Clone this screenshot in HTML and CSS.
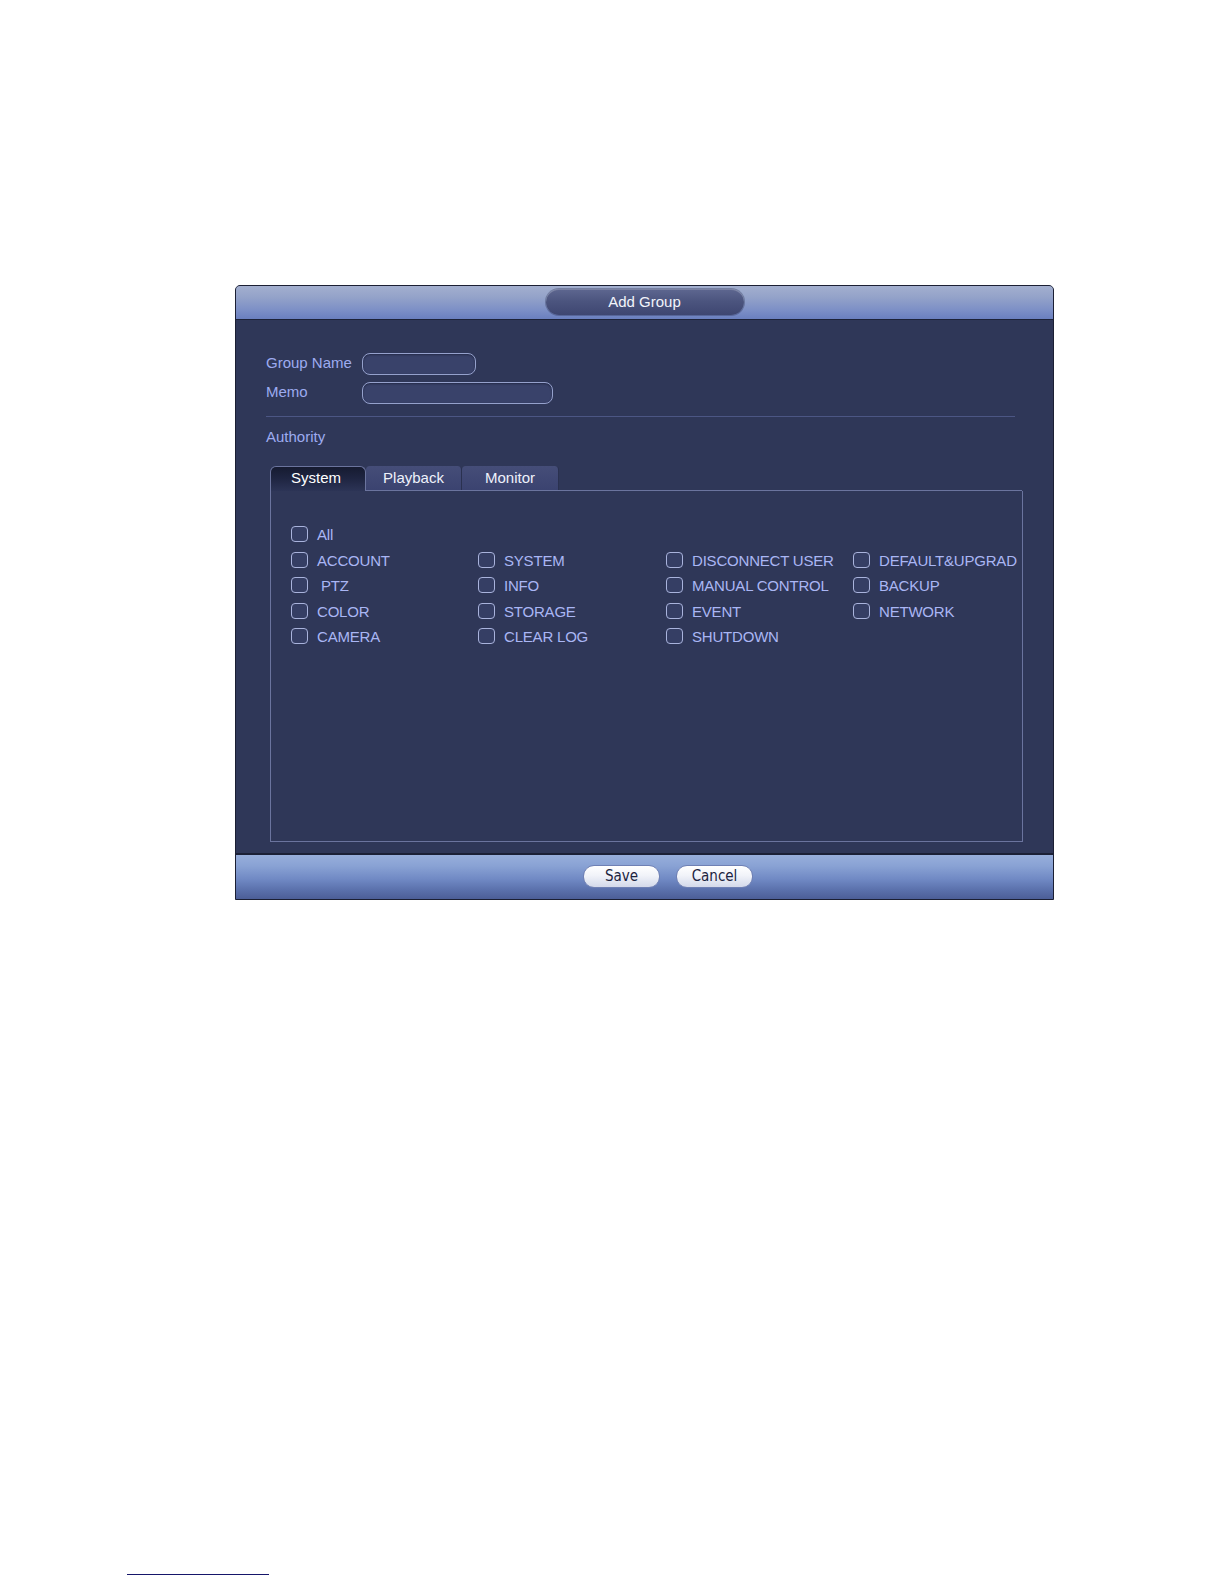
FILE: index.html
```html
<!DOCTYPE html>
<html lang="en">
<head>
<meta charset="utf-8">
<title>Add Group</title>
<link rel="stylesheet" href="styles.css">
</head>
<body>
<div class="page">
  <div class="dialog">
    <div class="header">
      <div class="title-pill">Add Group</div>
    </div>
    <div class="body">
      <div class="form-row">
        <span class="label">Group Name</span>
        <span class="input input-short"></span>
      </div>
      <div class="form-row">
        <span class="label">Memo</span>
        <span class="input input-long"></span>
      </div>
      <div class="separator"></div>
      <div class="section-label">Authority</div>
      <div class="tabs">
        <div class="tab tab-active">System</div>
        <div class="tab">Playback</div>
        <div class="tab">Monitor</div>
      </div>
      <div class="tab-panel">
        <div class="perm-grid">
          <label class="perm"><span class="box"></span><span class="perm-text">All</span></label>
          <span></span><span></span><span></span>

          <label class="perm"><span class="box"></span><span class="perm-text">ACCOUNT</span></label>
          <label class="perm"><span class="box"></span><span class="perm-text">SYSTEM</span></label>
          <label class="perm"><span class="box"></span><span class="perm-text">DISCONNECT USER</span></label>
          <label class="perm"><span class="box"></span><span class="perm-text">DEFAULT&amp;UPGRAD</span></label>

          <label class="perm"><span class="box"></span><span class="perm-text">&nbsp;PTZ</span></label>
          <label class="perm"><span class="box"></span><span class="perm-text">INFO</span></label>
          <label class="perm"><span class="box"></span><span class="perm-text">MANUAL CONTROL</span></label>
          <label class="perm"><span class="box"></span><span class="perm-text">BACKUP</span></label>

          <label class="perm"><span class="box"></span><span class="perm-text">COLOR</span></label>
          <label class="perm"><span class="box"></span><span class="perm-text">STORAGE</span></label>
          <label class="perm"><span class="box"></span><span class="perm-text">EVENT</span></label>
          <label class="perm"><span class="box"></span><span class="perm-text">NETWORK</span></label>

          <label class="perm"><span class="box"></span><span class="perm-text">CAMERA</span></label>
          <label class="perm"><span class="box"></span><span class="perm-text">CLEAR LOG</span></label>
          <label class="perm"><span class="box"></span><span class="perm-text">SHUTDOWN</span></label>
          <span></span>
        </div>
      </div>
    </div>
    <div class="footer">
      <button class="btn">Save</button>
      <button class="btn">Cancel</button>
    </div>
  </div>
  <div class="footnote-rule"></div>
</div>
</body>
</html>
```

FILE: styles.css
```css
html, body {
  margin: 0;
  padding: 0;
  background: #ffffff;
}

body {
  font-family: "Liberation Sans", Arial, sans-serif;
}

.page {
  padding-top: 285px;
}

.dialog {
  margin-left: 235px;
  width: 817px;
  height: 613px;
  border: 1px solid #1b1f33;
  border-radius: 5px 5px 0 0;
  background: #2f3758;
  display: flex;
  flex-direction: column;
  overflow: hidden;
}

.header {
  height: 33px;
  border-bottom: 1px solid #1d2238;
  background: linear-gradient(to bottom, #a3afcf 0%, #93a2c9 35%, #7b8ec6 75%, #6a7fbf 100%);
  display: flex;
  justify-content: center;
  align-items: flex-start;
}

.title-pill {
  margin-top: 3px;
  width: 198px;
  height: 26px;
  border-radius: 13px;
  background: linear-gradient(to bottom, #5e6790 0%, #4c557f 45%, #3e4671 100%);
  box-shadow: inset 0 1px 0 rgba(255,255,255,0.18), 0 0 0 1px rgba(40,46,80,0.35);
  color: #f2f4fb;
  font-size: 15px;
  line-height: 26px;
  text-align: center;
}

.body {
  flex: 1;
  padding: 33px 25px 7px 30px;
  display: flex;
  flex-direction: column;
}

.form-row {
  display: flex;
  align-items: center;
  height: 22px;
  margin-bottom: 7px;
}

.label,
.section-label {
  color: #9dabf0;
  font-size: 15px;
  line-height: 22px;
}

.label {
  width: 96px;
  flex: none;
  margin-top: -2px;
}

.input {
  display: block;
  height: 20px;
  border: 1px solid #95a1cc;
  border-radius: 8px;
  background: #39426a;
  box-shadow: inset 0 1px 2px rgba(10,14,30,0.45);
}

.input-short {
  width: 112px;
}

.input-long {
  width: 189px;
}

.separator {
  margin-top: 5px;
  width: 749px;
  height: 1px;
  background: #4c5684;
}

.section-label {
  margin-top: 9px;
}

.tabs {
  margin-top: 18px;
  margin-left: 4px;
  display: flex;
  height: 25px;
}

.tab {
  width: 96px;
  height: 25px;
  box-sizing: border-box;
  background: linear-gradient(to bottom, #454d78 0%, #3b4370 100%);
  border-radius: 4px 4px 0 0;
  border-right: 1px solid #2a3150;
  border-bottom: 1px solid #6b749e;
  color: #eef1fb;
  font-size: 15px;
  line-height: 24px;
  text-align: center;
}

.tab:last-child {
  width: 97px;
}

.tab-active {
  background: linear-gradient(to bottom, #161b31 0%, #1e2440 45%, #2c3456 100%);
  border: 1px solid #6b749e;
  border-bottom: none;
  border-radius: 6px 6px 0 0;
  color: #ffffff;
  line-height: 22px;
  padding-right: 4px;
}

.tab-panel {
  margin-left: 4px;
  width: 751px;
  height: 350px;
  border: 1px solid #6b749e;
  border-top: none;
}

.tab-panel::before {
  content: "";
  display: block;
  margin-left: 95px;
  height: 1px;
  background: #6b749e;
  margin-top: -1px;
}

.perm-grid {
  margin-top: 35px;
  margin-left: 20px;
  display: grid;
  grid-template-columns: 187px 188px 187px auto;
  grid-auto-rows: 25.5px;
}

.perm {
  display: flex;
  align-items: flex-start;
  white-space: nowrap;
}

.box {
  flex: none;
  width: 15px;
  height: 14px;
  border: 1.5px solid #a9b3dc;
  border-radius: 4px;
  background: #353e64;
}

.perm-text {
  margin-left: 9px;
  color: #aab6f4;
  font-size: 15px;
  letter-spacing: -0.2px;
  line-height: 17px;
}

.footer {
  height: 44px;
  border-top: 2px solid #1b2036;
  background: linear-gradient(to bottom, #97aedb 0%, #89a2d4 25%, #7089c4 55%, #5a70ab 80%, #4c5e97 100%);
  display: flex;
  justify-content: center;
  align-items: flex-start;
  gap: 16px;
  padding-left: 47px;
}

.btn {
  margin-top: 10px;
  width: 77px;
  height: 23px;
  padding: 0;
  border: 1px solid #6f80b4;
  border-radius: 11px;
  background: linear-gradient(to bottom, #ffffff 0%, #f1f3f9 45%, #d3d9ea 100%);
  color: #1c2340;
  font-family: "DejaVu Sans Condensed", "Liberation Sans", sans-serif;
  font-size: 15px;
  line-height: 21px;
  text-align: center;
}

.footnote-rule {
  margin-top: 674px;
  margin-left: 127px;
  width: 142px;
  height: 1px;
  background: #16166a;
}
```
